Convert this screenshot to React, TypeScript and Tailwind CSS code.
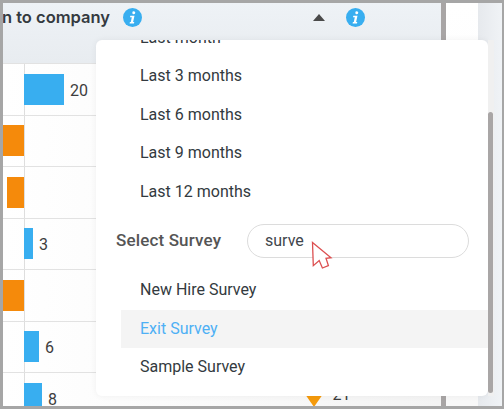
import React from "react";

function Info() {
  return (
    <svg width="19" height="19" viewBox="0 0 19 19" className="shrink-0">
      <circle cx="9.5" cy="9.5" r="9.5" fill="#38aef0" />
      <path d="M10.8 3.2a1.5 1.5 0 1 1-.01 3 1.5 1.5 0 0 1 .01-3zM7.3 7.8h4.2l-1.4 6.2h1.2l-.4 1.4H6.6l.3-1.4h.9l1-4.8H7z" fill="#fff" />
    </svg>
  );
}

const rows: { side: "l" | "r"; w: number; label?: string }[] = [
  { side: "r", w: 40, label: "20" },
  { side: "l", w: 21 },
  { side: "l", w: 17 },
  { side: "r", w: 9, label: "3" },
  { side: "l", w: 21 },
  { side: "r", w: 15, label: "6" },
  { side: "r", w: 18, label: "8" },
];

function Row({ r, last }: { r: (typeof rows)[number]; last?: boolean }) {
  return (
    <div className={`flex h-[51.5px] border-b border-[#e2e2e2] bg-gradient-to-r from-white to-[#f4f4f4] ${last ? "overflow-hidden border-b-0" : ""}`}>
      <div className="flex w-[21px] shrink-0 items-center justify-end">
        {r.side === "l" && <div className="h-[31px] bg-[#f58a0b]" style={{ width: r.w }} />}
      </div>
      <div className="flex w-[281px] shrink-0 items-center gap-[6px] shadow-[inset_1px_0_0_#dedede]">
        {r.side === "r" && <div className="h-[31px] bg-[#38aef0]" style={{ width: r.w }} />}
        {r.label && <span className="pt-[3px] text-[16px] text-[#3d3d3d]">{r.label}</span>}
      </div>
      {last && (
        <div className="flex items-start gap-[5px] pt-[21px]">
          <div className="h-0 w-0 border-x-[9px] border-t-[13px] border-x-transparent border-t-[#f59a0b]" />
          <span className="-mt-[7px] text-[16px] leading-[16px] text-[#3d3d3d]">-21</span>
        </div>
      )}
    </div>
  );
}

function Item({ children, active }: { children: React.ReactNode; active?: boolean }) {
  return (
    <div className={`flex h-[38.5px] items-center pl-[44px] text-[16px] ${active ? "ml-[25px] bg-[#f4f4f4] !pl-[19px] text-[#4eb0f5]" : "text-[#333a40]"}`}>
      {children}
    </div>
  );
}

export default function App() {
  return (
    <div className="relative h-[409px] w-[504px] overflow-hidden border-[3px] border-r-[2px] border-[#a6a6a6] font-['Roboto',sans-serif]">
      <div className="flex h-full">
        <div className="w-[438px] shrink-0">
          <div className="flex h-[61px] items-start border-b border-[#e2e2e2] bg-gradient-to-b from-[#eef2f6] to-[#e8ecf0] pt-[5px]">
            <div className="flex w-[107px] shrink-0 justify-end overflow-hidden whitespace-nowrap font-['Inter',sans-serif] text-[16.5px] font-semibold leading-[19px] text-[#343a40]">
              Comparison to company
            </div>
            <div className="ml-[13px]"><Info /></div>
            <div className="ml-[171px] mt-[6px] h-0 w-0 border-x-[6px] border-b-[7px] border-x-transparent border-b-[#4a4a4a]" />
            <div className="ml-[21px]"><Info /></div>
          </div>
          {rows.map((r, i) => (
            <Row key={i} r={r} last={i === rows.length - 1} />
          ))}
        </div>
        <div className="w-[5px] shrink-0 bg-[#a8a5a5]" />
        <div className="w-[32px] shrink-0 bg-gradient-to-b from-white to-[#f8f8f8]" />
        <div className="flex-1 bg-gradient-to-r from-[#e6e9ed] to-[#f0f3f6]" />
      </div>

      <div className="absolute left-[93px] top-[37px] h-[356px] w-[392px] overflow-hidden rounded-[6px] bg-white shadow-[0_0_6px_rgba(0,0,0,0.06)]">
        <div className="-mt-[21.5px]">
          <Item>Last month</Item>
          <Item>Last 3 months</Item>
          <Item>Last 6 months</Item>
          <Item>Last 9 months</Item>
          <Item>Last 12 months</Item>
          <div className="flex h-[60px] items-center pl-[20px]">
            <span className="w-[131px] shrink-0 text-[17px] font-medium tracking-[0.15px] text-[#555555]">Select Survey</span>
            <div className="flex h-[34px] w-[222px] items-center rounded-full border border-[#dcdcdc] pl-[17px] text-[16px] text-[#3f464c]">
              surve
            </div>
          </div>
          <Item>New Hire Survey</Item>
          <Item active>Exit Survey</Item>
          <Item>Sample Survey</Item>
        </div>
      </div>

      <div className="absolute left-[485px] top-[37px] h-[356px] w-[6px] bg-[#f0f0f0]" />
      <div className="absolute left-[485px] top-[109px] h-[281px] w-[5px] rounded-full bg-[#a9a6a6]" />

      <svg width="24" height="30" viewBox="0 0 24 30" className="absolute left-[306px] top-[236px]">
        <path d="M3.5 3.5L22 18.7 17 19.3 19.4 26.6 13.4 29 10.2 21.6 4.3 26.7Z" fill="#fff" stroke="#dc4f50" strokeWidth="1.3" strokeLinejoin="miter" />
      </svg>
    </div>
  );
}
